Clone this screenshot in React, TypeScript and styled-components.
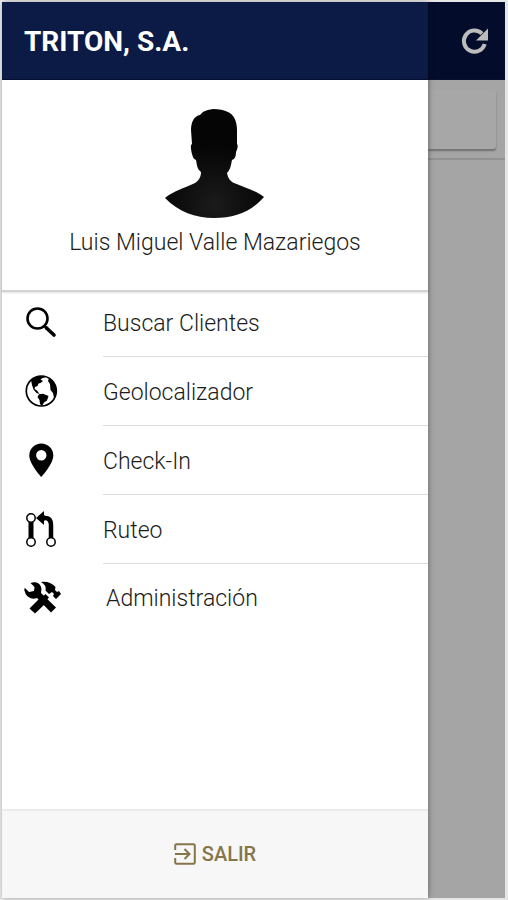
import React from "react";
import styled, { createGlobalStyle, css } from "styled-components";

const GlobalStyle = createGlobalStyle`
  * { box-sizing: border-box; }
  body {
    margin: 0;
    background: #e6e6e6;
    font-family: Roboto, "Noto Sans", sans-serif;
    color: #1c1c1c;
  }
  button { font: inherit; }
`;

const Screen = styled.div`
  display: flex;
  min-height: 100vh;
  border: 2px solid #e6e6e6;
  border-right-width: 3px;
`;

const Drawer = styled.aside`
  position: relative;
  z-index: 1;
  flex: 1;
  min-width: 0;
  display: flex;
  flex-direction: column;
  background: #fff;
  box-shadow: 1px 0 5px rgba(0, 0, 0, 0.3);
`;

const barStyle = css`
  height: 78px;
  display: flex;
  align-items: center;
  border-bottom: 1px solid #07102f;
`;

const DrawerHeader = styled.header`
  ${barStyle}
  padding: 2px 22px 0;
  background: #0b1b45;
`;

const Title = styled.h1`
  margin: 0;
  font-size: 28px;
  font-weight: 700;
  line-height: 36px;
  color: #fff;
`;

const Profile = styled.section`
  height: 212px;
  padding-top: 28px;
  display: flex;
  flex-direction: column;
  align-items: center;
  border-bottom: 2px solid #d2d2d2;
  box-shadow: 0 1px 2px rgba(0, 0, 0, 0.12);
`;

const Name = styled.p`
  margin: 7px 0 0;
  font-size: 23px;
  font-weight: 300;
  line-height: 32px;
`;

const Menu = styled.ul`
  flex: 1;
  margin: -4px 0 0;
  padding: 0;
  list-style: none;
`;

const MenuItem = styled.button`
  width: 100%;
  padding: 0;
  display: flex;
  border: 0;
  background: none;
  color: inherit;
  text-align: left;
  cursor: pointer;
`;

const IconCell = styled.span`
  width: 101px;
  height: 68px;
  padding-left: 20px;
  display: flex;
  align-items: center;
  color: #000;
`;

const MenuLabel = styled.span<{ $last: boolean }>`
  flex: 1;
  height: 69px;
  padding-top: ${(p) => (p.$last ? 0 : 3)}px;
  padding-left: ${(p) => (p.$last ? 3 : 0)}px;
  display: flex;
  align-items: center;
  border-bottom: ${(p) => (p.$last ? 0 : 1)}px solid #dcdcdc;
  font-size: 23px;
  font-weight: 300;
  line-height: 32px;
`;

const Footer = styled.footer`
  height: 89px;
  padding-bottom: 2px;
  display: flex;
  align-items: center;
  justify-content: center;
  border-top: 2px solid #ececec;
  background: #f7f7f7;
`;

const ExitButton = styled.button`
  display: flex;
  align-items: center;
  gap: 6px;
  padding: 0;
  border: 0;
  background: none;
  color: #85764a;
  font-size: 20px;
  font-weight: 500;
  line-height: 28px;
  cursor: pointer;
`;

const Backdrop = styled.main`
  width: 77px;
  display: flex;
  flex-direction: column;
  background: #a5a5a5;
`;

const PageBar = styled.div`
  ${barStyle}
  justify-content: flex-end;
  padding-right: 17px;
  background: #030d2b;
`;

const RefreshButton = styled.button`
  display: flex;
  padding: 0;
  border: 0;
  background: none;
  color: #bcbcbc;
  cursor: pointer;
`;

const SearchStrip = styled.div`
  height: 80px;
  padding: 10px 9px 10px 0;
  border-bottom: 2px solid #929292;
`;

const SearchCard = styled.div`
  height: 59px;
  border-radius: 0 3px 3px 0;
  background: #a7a7a7;
  box-shadow: 0 2px 2px rgba(0, 0, 0, 0.32);
`;

const Avatar = () => (
  <svg width="100" height="112" viewBox="0 0 100 112" role="img" aria-label="Luis Miguel Valle Mazariegos">
    <defs>
      <radialGradient id="torso" cx="50%" cy="88%" r="55%">
        <stop offset="0" stopColor="#1b1b1b" />
        <stop offset="1" stopColor="#050505" />
      </radialGradient>
    </defs>
    <path
      fill="url(#torso)"
      d="M48 1C42 2 38 3 35 7C29 8 26 14 26 22L27 36C25 37 26 42 27 46C28 50 29 51 31 52C32 57 32 61 36 64C36 70 33 73 30 75C20 80 8 83 0 90C14 104 30 110 49 110C70 110 86 104 99 89C90 82 78 79 69 75C65 73 63 70 62 65C66 61 66 56 67 52C70 51 71 48 71 44C73 40 73 37 72 36L72 22C72 12 68 6 63 4C59 2 54 1 48 1Z"
    />
  </svg>
);

const SearchIcon = () => (
  <svg width="38" height="38" viewBox="0 0 38 38" fill="none" stroke="currentColor" aria-hidden="true">
    <circle cx="15.5" cy="15.5" r="10" strokeWidth="2.6" />
    <path d="M22.5 23L24.5 25" strokeWidth="2.5" />
    <path d="M24.5 25L32 32" strokeWidth="3.6" strokeLinecap="round" />
  </svg>
);

const GlobeIcon = () => (
  <svg width="38" height="38" viewBox="0 0 38 38" aria-hidden="true">
    <circle cx="19.3" cy="19" r="15" fill="none" stroke="currentColor" strokeWidth="1.7" />
    <path
      fill="currentColor"
      d="M9 8L12 5.5L17 4L22 4.3L23 5.5L20.5 6L18.5 7.5L21 9L18.5 11L16.5 11.5L15.5 14L13 15L12.5 17L15 18.5L17.5 22L14.5 21L11.5 17.5L10 13ZM17 22.3L21 21.8L26.5 24L25 28.5L22 30.5L20 34L18 32L17.5 28L15.5 25ZM27 6L31 9L34 15L34 22L32 26L31 21L28.5 18L28 12L26 9Z"
    />
  </svg>
);

const PinIcon = () => (
  <svg width="38" height="38" viewBox="0 0 38 38" aria-hidden="true">
    <path
      fill="currentColor"
      fillRule="evenodd"
      d="M19.3 2.5A12 12 0 0 0 7.3 14.5C7.3 23 19.3 36 19.3 36S31.3 23 31.3 14.5A12 12 0 0 0 19.3 2.5ZM19.3 9A5.2 5.2 0 1 1 19.3 19.4A5.2 5.2 0 0 1 19.3 9Z"
    />
  </svg>
);

const RouteIcon = () => (
  <svg width="38" height="38" viewBox="0 0 38 38" fill="none" stroke="currentColor" aria-hidden="true">
    <path d="M9 12V29" strokeWidth="5" />
    <path d="M20 8H23Q29 8 29 15V29" strokeWidth="4.5" />
    <path d="M14 8L22 1V5.5H23V10.5H22V15Z" fill="currentColor" stroke="none" />
    <g fill="#fff" strokeWidth="1.5">
      <circle cx="9" cy="8" r="4.2" />
      <circle cx="9" cy="32" r="4.2" />
      <circle cx="29" cy="32" r="4.2" />
    </g>
  </svg>
);

const ToolsIcon = () => (
  <svg width="40" height="38" viewBox="0 0 40 38" fill="currentColor" aria-hidden="true">
    <path d="M8.5 4C13 2 18 4 19 8C20 10 19 12 19 14L34 28.5L29 33.5L15 19C10 21 4 18 3 13C2 11 2 10 3 9L7 13L12 12L12.5 8Z" />
    <path d="M19 3C25 2 30 4 33.5 8L33 11L35 13L37 12L39 15L34 20L31 17L32 15L30 13L27 15L23.5 11.5C24.5 7 22 5 19 3Z" />
    <path d="M17.5 19.5L23 25L13 34.5L7.5 29.5Z" />
    <path d="M23.5 15L27 18.5L24 21.5L20.5 18Z" />
  </svg>
);

const ExitIcon = () => (
  <svg width="22" height="22" viewBox="0 0 22 22" fill="none" stroke="currentColor" strokeWidth="2" aria-hidden="true">
    <path d="M1.2 7V2.5Q1.2 1.2 2.5 1.2H19.5Q20.8 1.2 20.8 2.5V19.5Q20.8 20.8 19.5 20.8H2.5Q1.2 20.8 1.2 19.5V15" />
    <path d="M1 11H15M10.5 6L15.5 11L10.5 16" />
  </svg>
);

const RefreshIcon = () => (
  <svg width="28" height="28" viewBox="0 0 28 28" fill="none" aria-hidden="true">
    <path d="M22 6.6A10.6 10.6 0 1 0 24.7 17" stroke="currentColor" strokeWidth="4" />
    <path d="M28 1.5V13.5H16Z" fill="currentColor" />
  </svg>
);

const items = [
  { label: "Buscar Clientes", Icon: SearchIcon },
  { label: "Geolocalizador", Icon: GlobeIcon },
  { label: "Check-In", Icon: PinIcon },
  { label: "Ruteo", Icon: RouteIcon },
  { label: "Administración", Icon: ToolsIcon },
];

export default function App() {
  return (
    <>
      <GlobalStyle />
      <Screen>
        <Drawer>
          <DrawerHeader>
            <Title>TRITON, S.A.</Title>
          </DrawerHeader>
          <Profile>
            <Avatar />
            <Name>Luis Miguel Valle Mazariegos</Name>
          </Profile>
          <Menu>
            {items.map(({ label, Icon }, i) => (
              <li key={label}>
                <MenuItem type="button">
                  <IconCell>
                    <Icon />
                  </IconCell>
                  <MenuLabel $last={i === items.length - 1}>{label}</MenuLabel>
                </MenuItem>
              </li>
            ))}
          </Menu>
          <Footer>
            <ExitButton type="button">
              <ExitIcon />
              SALIR
            </ExitButton>
          </Footer>
        </Drawer>
        <Backdrop>
          <PageBar>
            <RefreshButton type="button" aria-label="Actualizar">
              <RefreshIcon />
            </RefreshButton>
          </PageBar>
          <SearchStrip>
            <SearchCard />
          </SearchStrip>
        </Backdrop>
      </Screen>
    </>
  );
}
